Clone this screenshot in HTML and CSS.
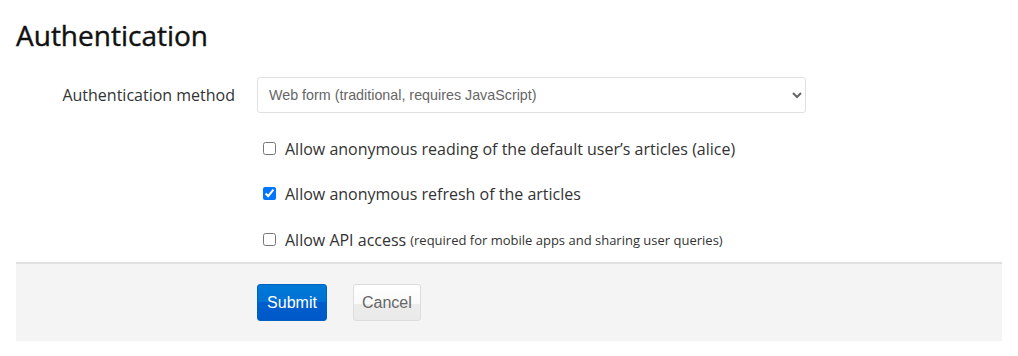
FILE: index.html
```html
<!DOCTYPE html>
<html lang="en">
<head>
    <meta charset="UTF-8">
    <title>Authentication</title>
    <link rel="stylesheet" href="styles.css">
</head>
<body>
    <div class="page">
        <h1>Authentication</h1>

        <form action="#" method="post">
            <div class="form-group">
                <label class="group-name" for="auth_type">Authentication method</label>
                <div class="group-controls">
                    <select id="auth_type" name="auth_type">
                        <option selected>Web form (traditional, requires JavaScript)</option>
                        <option>HTTP (for advanced users with HTTPS)</option>
                        <option>None (dangerous)</option>
                    </select>
                </div>
            </div>

            <div class="form-group">
                <div class="group-controls">
                    <label class="checkbox" for="anon_access">
                        <input type="checkbox" id="anon_access" name="anon_access">
                        Allow anonymous reading of the default user’s articles (alice)
                    </label>
                </div>
            </div>

            <div class="form-group">
                <div class="group-controls">
                    <label class="checkbox" for="anon_refresh">
                        <input type="checkbox" id="anon_refresh" name="anon_refresh" checked>
                        Allow anonymous refresh of the articles
                    </label>
                </div>
            </div>

            <div class="form-group">
                <div class="group-controls">
                    <label class="checkbox" for="api_enabled">
                        <input type="checkbox" id="api_enabled" name="api_enabled">
                        Allow API access <small>(required for mobile apps and sharing user queries)</small>
                    </label>
                </div>
            </div>

            <div class="form-group form-actions">
                <div class="group-controls">
                    <button type="submit" class="btn btn-important">Submit</button>
                    <button type="reset" class="btn">Cancel</button>
                </div>
            </div>
        </form>
    </div>
</body>
</html>
```

FILE: styles.css
```css
body {
    margin: 0;
    background: #fff;
    color: #303136;
    font-family: "Open Sans", "DejaVu Sans", sans-serif;
    font-size: 16px;
}

.page {
    padding: 0 16px;
}

h1 {
    margin: 0;
    padding: 16px 0 18px;
    font-size: 28px;
    font-weight: 400;
    line-height: 38px;
    color: #111;
    -webkit-text-stroke: 0.4px #111;
}

.form-group {
    display: flex;
    align-items: center;
    padding: 5px 0;
}

.group-name {
    width: 241px;
    padding-right: 22px;
    box-sizing: border-box;
    text-align: right;
    color: #333;
}

.group-controls {
    margin-left: 241px;
    flex: 1;
    min-height: 35px;
    display: flex;
    align-items: center;
}

.group-name + .group-controls {
    margin-left: 0;
}

select {
    width: 549px;
    height: 36px;
    padding: 0 7px;
    border: 1px solid #e0e0e0;
    border-radius: 3px;
    background: #fff;
    color: #666;
    font-family: "Liberation Sans", Arial, sans-serif;
    font-size: 14.3px;
}

.checkbox {
    display: flex;
    align-items: center;
    color: #333;
    line-height: 20px;
}

.checkbox input {
    margin: 0 9px 0 6px;
    width: 13px;
    height: 13px;
}

.checkbox small {
    font-size: 13px;
    margin-left: 4px;
}

.form-group:nth-child(2) {
    padding-top: 13px;
}

.form-group:nth-child(4) {
    padding-top: 6px;
}

.form-actions {
    margin-top: 0;
    padding: 20px 0 20px;
    background: #f4f4f4;
    border-top: 2px solid #e0e0e0;
}

.btn {
    height: 37px;
    padding: 0 8px;
    margin-right: 26px;
    border: 1px solid #ddd;
    border-radius: 3px;
    background: linear-gradient(to bottom, #fff 0%, #fafafa 55%, #ececec 55%, #eaeaea 100%);
    color: #666;
    font-family: "Liberation Sans", Arial, sans-serif;
    font-size: 16px;
}

.btn-important {
    width: 70px;
    border-color: #0062be;
    background: linear-gradient(to bottom, #0079d6 0%, #0070d4 50%, #005fcc 50%, #0058c8 100%);
    color: #fff;
}
```
